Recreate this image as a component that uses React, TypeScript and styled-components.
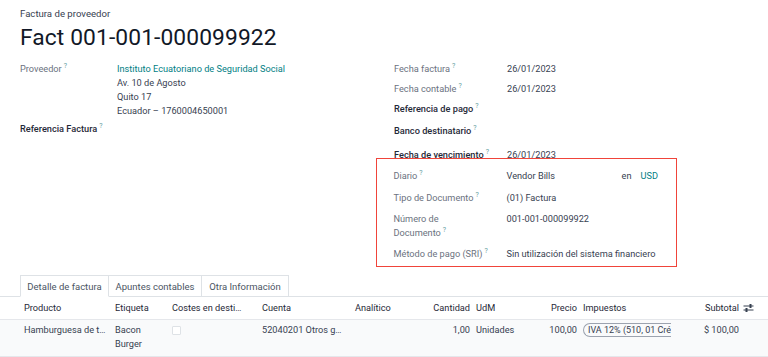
import React from "react";
import styled, { createGlobalStyle } from "styled-components";

const Global = createGlobalStyle`
  html, body { margin: 0; padding: 0; background: #fff; }
  body { font-family: Roboto, "Noto Sans", sans-serif; color: #374151; -webkit-font-smoothing: antialiased; }
  * { box-sizing: border-box; }
`;

const Page = styled.div`
  width: 768px;
  height: 357px;
  overflow: hidden;
  background: #fff;
`;

const Sheet = styled.div`
  padding: 7px 20px 0 20px;
`;

const Breadcrumb = styled.div`
  font-size: 9.6px;
  line-height: 13px;
  color: #374151;
`;

const Title = styled.h1`
  margin: 4px 0 0 0;
  font-size: 22.8px;
  line-height: 28px;
  font-weight: 400;
  color: #111827;
  letter-spacing: 0.1px;
`;

const TopGrid = styled.div`
  display: grid;
  grid-template-columns: 356px 1fr;
  margin-top: 10px;
`;

const Col = styled.div`
  display: flex;
  flex-direction: column;
`;

const Field = styled.div<{ $mt?: number; $label?: number }>`
  display: grid;
  grid-template-columns: ${(p) => p.$label ?? 97}px 1fr;
  margin-top: ${(p) => p.$mt ?? 0}px;
  font-size: 9.2px;
  line-height: 14px;
`;

const Label = styled.div<{ $strong?: boolean }>`
  color: ${(p) => (p.$strong ? "#1f2937" : "#6b7280")};
  font-weight: ${(p) => (p.$strong ? 500 : 400)};
  white-space: nowrap;
`;

const Help = styled.sup`
  font-size: 7px;
  color: #5f9ea0;
  margin-left: 2px;
  vertical-align: 4px;
  line-height: 0;
  font-weight: 400;
`;

const Value = styled.div`
  color: #374151;
  display: flex;
  flex-direction: column;
  white-space: nowrap;
`;

const LinkText = styled.span`
  color: #017e84;
`;

const RightCol = styled(Col)`
  padding-left: 18px;
`;

const Highlight = styled.div`
  margin: -4px 0 0 -18px;
  width: 301px;
  border: 1.5px solid #f0443a;
  padding: 10px 17px 5px 16.5px;
  display: flex;
  flex-direction: column;
`;

const InlineValue = styled.div`
  display: flex;
  color: #374151;
`;

const Currency = styled.span`
  margin-left: auto;
  padding-right: 1px;
  color: #374151;
  span { color: #017e84; margin-left: 9px; }
`;

const TabBar = styled.div`
  margin-top: 8px;
  display: flex;
  padding-left: 20px;
  border-bottom: 1px solid #dee2e6;
`;

const Tab = styled.div<{ $active?: boolean; $w: number }>`
  width: ${(p) => p.$w}px;
  height: 22px;
  margin-bottom: -1px;
  display: flex;
  align-items: center;
  justify-content: center;
  font-size: 9.5px;
  color: #4b5563;
  background: #fff;
  border: 1px solid #dee2e6;
  border-left: ${(p) => (p.$active ? "1px solid #dee2e6" : "none")};
  border-bottom: 1px solid ${(p) => (p.$active ? "#fff" : "#dee2e6")};
`;

const Table = styled.table`
  width: 768px;
  border-collapse: collapse;
  table-layout: fixed;
  font-size: 9.2px;
  color: #374151;
`;

const Th = styled.th<{ $right?: boolean; $pl?: number; $pr?: number }>`
  font-weight: 400;
  color: #1f2937;
  text-align: ${(p) => (p.$right ? "right" : "left")};
  padding: 0 ${(p) => p.$pr ?? 3}px 0 ${(p) => p.$pl ?? 4}px;
  height: 22px;
  border-bottom: 1px solid #e5e7eb;
  white-space: nowrap;
  overflow: hidden;
  text-overflow: ellipsis;
`;

const Tr = styled.tr`
  background: #f9fafb;
  border-bottom: 1px solid #e5e7eb;
`;

const Td = styled.td<{ $right?: boolean; $pl?: number; $pr?: number; $wrap?: boolean }>`
  text-align: ${(p) => (p.$right ? "right" : "left")};
  vertical-align: top;
  padding: 3px ${(p) => p.$pr ?? 3}px 5px ${(p) => p.$pl ?? 4}px;
  line-height: 14px;
  white-space: ${(p) => (p.$wrap ? "normal" : "nowrap")};
  overflow: hidden;
  text-overflow: ellipsis;
`;

const Check = styled.div`
  width: 9px;
  height: 9px;
  margin-top: 3px;
  border: 1px solid #dee2e6;
  border-radius: 1px;
  background: #fff;
`;

const Pill = styled.div`
  display: inline-block;
  max-width: 88px;
  height: 14px;
  line-height: 12px;
  padding: 0 0 0 4px;
  border: 1px solid #9ca3af;
  border-right: none;
  border-radius: 7px 0 0 7px;
  font-size: 9px;
  white-space: nowrap;
  overflow: hidden;
  color: #374151;
`;

const AdjustIcon = () => (
  <svg width="11" height="10" viewBox="0 0 11 10" style={{ display: "block" }}>
    <line x1="0.5" y1="3" x2="10.5" y2="3" stroke="#374151" strokeWidth="1" />
    <line x1="0.5" y1="7" x2="10.5" y2="7" stroke="#374151" strokeWidth="1" />
    <rect x="6.5" y="1" width="2" height="4" fill="#374151" />
    <rect x="2.5" y="5" width="2" height="4" fill="#374151" />
  </svg>
);

const Q = () => <Help>?</Help>;

export default function App() {
  return (
    <Page>
      <Global />
      <Sheet>
        <Breadcrumb>Factura de proveedor</Breadcrumb>
        <Title>Fact 001-001-000099922</Title>
        <TopGrid>
          <Col>
            <Field>
              <Label>
                Proveedor<Q />
              </Label>
              <Value>
                <LinkText>Instituto Ecuatoriano de Seguridad Social</LinkText>
                <span>Av. 10 de Agosto</span>
                <span>Quito 17</span>
                <span>Ecuador – 1760004650001</span>
              </Value>
            </Field>
            <Field $mt={4}>
              <Label $strong>
                Referencia Factura<Q />
              </Label>
              <Value />
            </Field>
          </Col>
          <RightCol>
            <Field $label={113}>
              <Label>
                Fecha factura<Q />
              </Label>
              <Value>26/01/2023</Value>
            </Field>
            <Field $label={113} $mt={6}>
              <Label>
                Fecha contable<Q />
              </Label>
              <Value>26/01/2023</Value>
            </Field>
            <Field $label={113} $mt={6}>
              <Label $strong>
                Referencia de pago<Q />
              </Label>
              <Value />
            </Field>
            <Field $label={113} $mt={8}>
              <Label $strong>
                Banco destinatario<Q />
              </Label>
              <Value />
            </Field>
            <Field $label={113} $mt={10}>
              <Label $strong>
                Fecha de vencimiento<Q />
              </Label>
              <Value>26/01/2023</Value>
            </Field>
            <Highlight>
              <Field $label={113}>
                <Label>
                  Diario<Q />
                </Label>
                <InlineValue>
                  Vendor Bills
                  <Currency>
                    en<span>USD</span>
                  </Currency>
                </InlineValue>
              </Field>
              <Field $label={113} $mt={8}>
                <Label>
                  Tipo de Documento<Q />
                </Label>
                <Value>(01) Factura</Value>
              </Field>
              <Field $label={113} $mt={7}>
                <Label>
                  Número de
                  <br />
                  Documento<Q />
                </Label>
                <Value>001-001-000099922</Value>
              </Field>
              <Field $label={113} $mt={7}>
                <Label>
                  Método de pago (SRI)<Q />
                </Label>
                <Value>Sin utilización del sistema financiero</Value>
              </Field>
            </Highlight>
          </RightCol>
        </TopGrid>
      </Sheet>
      <TabBar>
        <Tab $active $w={89}>Detalle de factura</Tab>
        <Tab $w={93}>Apuntes contables</Tab>
        <Tab $w={87}>Otra Información</Tab>
      </TabBar>
      <Table>
        <colgroup>
          <col style={{ width: 111 }} />
          <col style={{ width: 57 }} />
          <col style={{ width: 90 }} />
          <col style={{ width: 93 }} />
          <col style={{ width: 69 }} />
          <col style={{ width: 53 }} />
          <col style={{ width: 52 }} />
          <col style={{ width: 55 }} />
          <col style={{ width: 98 }} />
          <col style={{ width: 64 }} />
          <col style={{ width: 26 }} />
        </colgroup>
        <thead>
          <tr>
            <Th $pl={24}>Producto</Th>
            <Th>Etiqueta</Th>
            <Th $pr={16}>Costes en destino</Th>
            <Th>Cuenta</Th>
            <Th>Analítico</Th>
            <Th $right>Cantidad</Th>
            <Th $pl={3}>UdM</Th>
            <Th $right>Precio</Th>
            <Th $pl={3}>Impuestos</Th>
            <Th $right>Subtotal</Th>
            <Th $pl={1}>
              <AdjustIcon />
            </Th>
          </tr>
        </thead>
        <tbody>
          <Tr>
            <Td $pl={24} $pr={4}>Hamburguesa de tomate</Td>
            <Td $wrap>Bacon Burger</Td>
            <Td>
              <Check />
            </Td>
            <Td $pr={6}>52040201 Otros gastos</Td>
            <Td />
            <Td $right>1,00</Td>
            <Td $pl={3}>Unidades</Td>
            <Td $right>100,00</Td>
            <Td $pl={3}>
              <Pill>IVA 12% (510, 01 Crédito)</Pill>
            </Td>
            <Td $right>$ 100,00</Td>
            <Td />
          </Tr>
        </tbody>
      </Table>
    </Page>
  );
}
